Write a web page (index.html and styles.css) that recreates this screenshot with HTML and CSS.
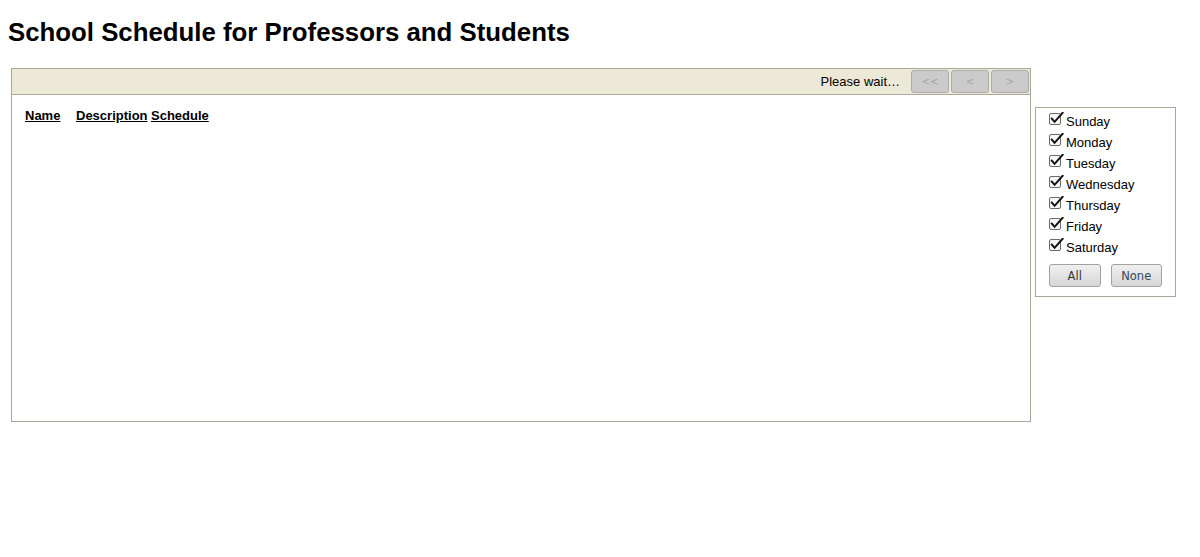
FILE: index.html
```html
<!DOCTYPE html>
<html>
<head>
<meta charset="utf-8">
<title>School Schedule</title>
<link rel="stylesheet" href="styles.css">
</head>
<body>
<h1 class="title">School Schedule for Professors and Students</h1>
<div class="layout">
  <div class="main-panel">
    <div class="toolbar">
      <span class="status">Please wait…</span>
      <div class="nav">
        <button class="nav-btn">&lt;&lt;</button>
        <button class="nav-btn">&lt;</button>
        <button class="nav-btn">&gt;</button>
      </div>
    </div>
    <div class="content">
      <div class="head-row">
        <span class="col col-name">Name</span>
        <span class="col col-desc">Description</span>
        <span class="col col-sched">Schedule</span>
      </div>
    </div>
  </div>
  <div class="side-panel">
    <ul class="days">
      <li class="day"><svg class="check" viewBox="0 0 15 14" width="15" height="14"><rect x="0.5" y="1.5" width="11" height="11" rx="1.5" class="box"/><path d="M2.8 6.6 L5.6 9.8 L13.6 0.8" class="mark"/></svg><span>Sunday</span></li>
      <li class="day"><svg class="check" viewBox="0 0 15 14" width="15" height="14"><rect x="0.5" y="1.5" width="11" height="11" rx="1.5" class="box"/><path d="M2.8 6.6 L5.6 9.8 L13.6 0.8" class="mark"/></svg><span>Monday</span></li>
      <li class="day"><svg class="check" viewBox="0 0 15 14" width="15" height="14"><rect x="0.5" y="1.5" width="11" height="11" rx="1.5" class="box"/><path d="M2.8 6.6 L5.6 9.8 L13.6 0.8" class="mark"/></svg><span>Tuesday</span></li>
      <li class="day"><svg class="check" viewBox="0 0 15 14" width="15" height="14"><rect x="0.5" y="1.5" width="11" height="11" rx="1.5" class="box"/><path d="M2.8 6.6 L5.6 9.8 L13.6 0.8" class="mark"/></svg><span>Wednesday</span></li>
      <li class="day"><svg class="check" viewBox="0 0 15 14" width="15" height="14"><rect x="0.5" y="1.5" width="11" height="11" rx="1.5" class="box"/><path d="M2.8 6.6 L5.6 9.8 L13.6 0.8" class="mark"/></svg><span>Thursday</span></li>
      <li class="day"><svg class="check" viewBox="0 0 15 14" width="15" height="14"><rect x="0.5" y="1.5" width="11" height="11" rx="1.5" class="box"/><path d="M2.8 6.6 L5.6 9.8 L13.6 0.8" class="mark"/></svg><span>Friday</span></li>
      <li class="day"><svg class="check" viewBox="0 0 15 14" width="15" height="14"><rect x="0.5" y="1.5" width="11" height="11" rx="1.5" class="box"/><path d="M2.8 6.6 L5.6 9.8 L13.6 0.8" class="mark"/></svg><span>Saturday</span></li>
    </ul>
    <div class="actions">
      <button class="act-btn">All</button>
      <button class="act-btn act-none">None</button>
    </div>
  </div>
</div>
</body>
</html>
```
FILE: styles.css
```css
html, body {
  background: #ffffff;
}
body {
  margin: 8px;
  font-family: "Liberation Sans", Arial, sans-serif;
  color: #000;
}
.title {
  font-size: 25.8px;
  line-height: 30px;
  font-weight: bold;
  margin: 9px 0 0 0;
}
.layout {
  display: flex;
  align-items: flex-start;
  gap: 4px;
  margin: 21px 0 0 3px;
}
.main-panel {
  box-sizing: border-box;
  width: 1020px;
  height: 354px;
  border: 1px solid #aca899;
  display: flex;
  flex-direction: column;
}
.toolbar {
  box-sizing: border-box;
  height: 26px;
  background: #ece9d8;
  border-bottom: 1px solid #aca899;
  display: flex;
  justify-content: flex-end;
  align-items: center;
  padding: 0 1px 0 0;
}
.status {
  font-size: 13px;
  line-height: 16px;
  margin-right: 11px;
  margin-top: 1px;
}
.nav {
  display: flex;
  gap: 2px;
}
.nav-btn {
  box-sizing: border-box;
  width: 38px;
  height: 23px;
  padding: 0;
  background: #cbcbcb;
  border: 1px solid #ababab;
  border-radius: 3px;
  color: #a3a3a3;
  font-family: "DejaVu Sans", sans-serif;
  font-size: 10px;
}
.content {
  padding: 13px 13px;
}
.head-row {
  display: flex;
  font-size: 13px;
  line-height: 16px;
  font-weight: bold;
}
.col {
  text-decoration: underline;
}
.col-name { width: 51px; }
.col-desc { width: 75px; }
.side-panel {
  box-sizing: border-box;
  width: 141px;
  height: 190px;
  margin-top: 39px;
  border: 1px solid #aca899;
  padding: 3px 13px 0 13px;
}
.days {
  list-style: none;
  margin: 0;
  padding: 0;
}
.day {
  display: flex;
  align-items: flex-start;
  height: 21px;
  font-size: 13px;
  line-height: 21px;
}
.check {
  display: block;
  flex: none;
  margin-top: 1px;
  margin-right: 2px;
}
.box {
  fill: #f7f7f7;
  stroke: #6b6b6b;
  stroke-width: 1;
}
.mark {
  fill: none;
  stroke: #111;
  stroke-width: 2;
  stroke-linecap: square;
}
.actions {
  display: flex;
  gap: 10px;
  margin-top: 6px;
}
.act-btn {
  box-sizing: border-box;
  width: 52px;
  height: 23px;
  padding: 0;
  background: linear-gradient(#f0f0f0, #d6d6d6);
  border: 1px solid #a2a2a2;
  border-radius: 3px;
  color: #333;
  font-family: "DejaVu Sans", sans-serif;
  font-size: 11.5px;
}
.act-none {
  color: #344a5a;
}
```
